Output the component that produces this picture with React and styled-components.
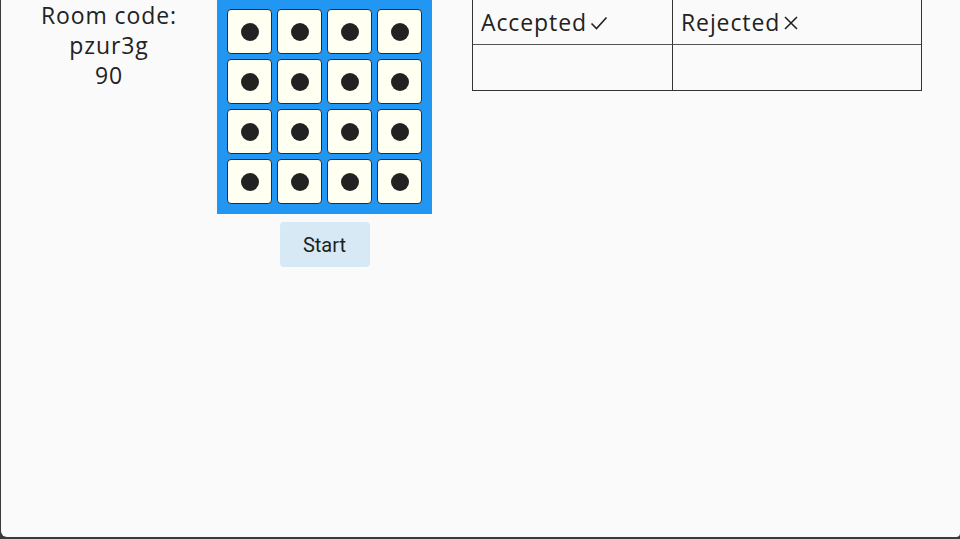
import React from "react";
import styled, { createGlobalStyle } from "styled-components";

const Global = createGlobalStyle`
  html, body { margin: 0; padding: 0; background: #3a3a3a; }
  body { width: 960px; height: 539px; overflow: hidden; }
  #root { width: 960px; height: 539px; }
`;

const Window = styled.div`
  margin-left: 1px;
  width: 959px;
  height: 537px;
  background: #fafafa;
  border-bottom-left-radius: 6px;
  border-bottom-right-radius: 4px;
  overflow: hidden;
  display: flex;
  align-items: flex-start;
  font-family: "Open Sans", "Noto Sans", sans-serif;
  color: #222;
`;

const InfoColumn = styled.div`
  width: 216px;
  flex: none;
  text-align: center;
  font-size: 23px;
  letter-spacing: 0.9px;
  line-height: 30px;
`;

const BoardColumn = styled.div`
  flex: none;
  display: flex;
  flex-direction: column;
  align-items: center;
  gap: 8px;
`;

const Board = styled.div`
  width: 215px;
  box-sizing: border-box;
  background: #2196f3;
  padding: 9px 10px 10px 10px;
  display: grid;
  grid-template-columns: repeat(4, 45px);
  grid-auto-rows: 45px;
  gap: 5px;
`;

const Tile = styled.div`
  box-sizing: border-box;
  background: #fffff2;
  border: 1px solid #2a2a2a;
  border-radius: 4px;
  display: flex;
  align-items: center;
  justify-content: center;
`;

const Dot = styled.div`
  width: 18px;
  height: 18px;
  border-radius: 50%;
  background: #222;
`;

const StartButton = styled.button`
  width: 90px;
  height: 45px;
  padding: 0;
  border: none;
  border-radius: 4px;
  background: #d6e9f5;
  color: #1f1f1f;
  font-family: Roboto, sans-serif;
  font-size: 20px;
  cursor: pointer;
`;

const TableWrap = styled.div`
  flex: none;
  margin-left: 40px;
  width: 450px;
  display: grid;
  grid-template-columns: 200px 1fr;
  grid-auto-rows: 45px;
  border-left: 1px solid #333;
  border-right: 1px solid #333;
  border-bottom: 1px solid #333;
  box-sizing: border-box;
`;

const Cell = styled.div`
  box-sizing: border-box;
  border-right: ${(p) => (p.$last ? "none" : "1px solid #333")};
  border-bottom: ${(p) => (p.$header ? "1px solid #555" : "none")};
  padding: 0 8px;
  display: flex;
  align-items: center;
  font-size: 23px;
  letter-spacing: 0.9px;
  gap: 3px;
`;

const Icon = styled.svg`
  flex: none;
  margin-top: 1px;
`;

const Check = () => (
  <Icon width="18" height="16" viewBox="0 0 18 16">
    <path d="M1.5 8.5 L6.5 13.5 L16.5 2.5" fill="none" stroke="#222" strokeWidth="1.6" />
  </Icon>
);

const Cross = () => (
  <Icon width="16" height="16" viewBox="0 0 16 16">
    <path d="M2 2 L14 14 M14 2 L2 14" fill="none" stroke="#222" strokeWidth="1.6" />
  </Icon>
);

export default function App() {
  const tiles = Array.from({ length: 16 });
  return (
    <>
      <Global />
      <Window>
        <InfoColumn>
          <div>Room code:</div>
          <div>pzur3g</div>
          <div>90</div>
        </InfoColumn>
        <BoardColumn>
          <Board>
            {tiles.map((_, i) => (
              <Tile key={i}>
                <Dot />
              </Tile>
            ))}
          </Board>
          <StartButton>Start</StartButton>
        </BoardColumn>
        <TableWrap>
          <Cell $header>
            Accepted
            <Check />
          </Cell>
          <Cell $header $last>
            Rejected
            <Cross />
          </Cell>
          <Cell />
          <Cell $last />
        </TableWrap>
      </Window>
    </>
  );
}
